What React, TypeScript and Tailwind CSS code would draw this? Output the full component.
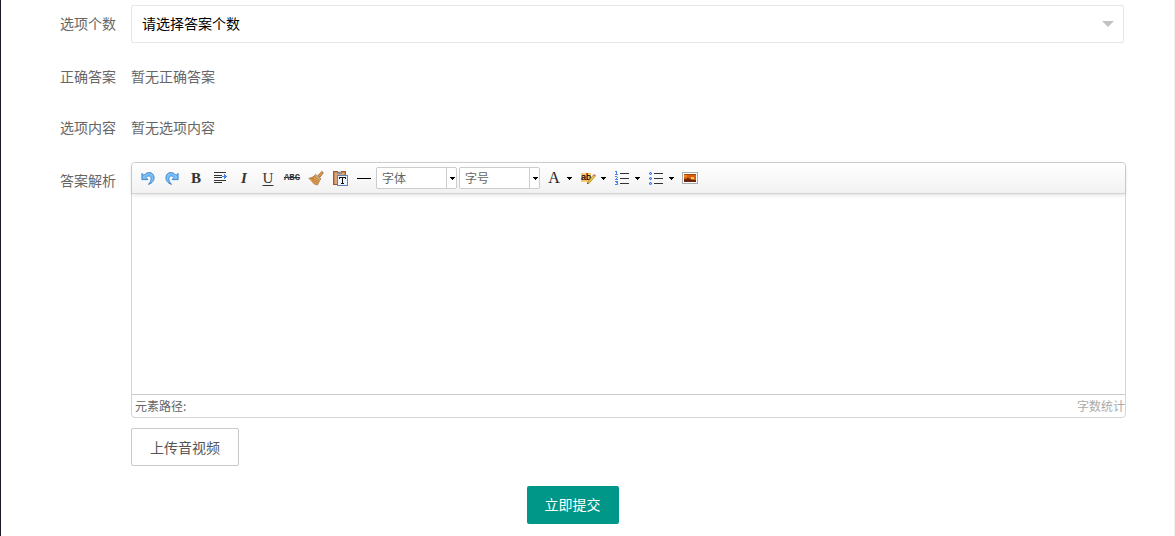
import type { ReactNode } from "react";

function Undo() {
  return (
    <svg className="h-4 w-4" viewBox="0 0 16 16" fill="#7cc0f5" stroke="#2f7fce" strokeWidth="0.9" strokeLinejoin="round">
      <path d="M1.9 3.4V9.6H8L6 7.5C7.3 5.6 10.6 5.3 11.1 8C11.4 10.4 10.2 12.4 8.4 14.4C12.2 13.3 14.4 10.4 14 7C13.3 1.9 7.4 1 4 5.4Z" />
    </svg>
  );
}

function Redo() {
  return (
    <svg className="h-4 w-4" viewBox="0 0 16 16" fill="#7cc0f5" stroke="#2f7fce" strokeWidth="0.9" strokeLinejoin="round">
      <path d="M14.1 3.4V9.6H8L10 7.5C8.7 5.6 5.4 5.3 4.9 8C4.6 10.4 5.8 12.4 7.6 14.4C3.8 13.3 1.6 10.4 2 7C2.7 1.9 8.6 1 12 5.4Z" />
    </svg>
  );
}

function Indent() {
  return (
    <svg className="h-4 w-4" viewBox="0 0 16 16" shapeRendering="crispEdges">
      <path d="M2 2.5H14M2 5.5H10M2 7.5H10M2 10.5H14M2 12.5H10" stroke="#333" strokeWidth="1" />
      <path d="M10 6H12V4H13V5H14V6H15V7H14V8H13V9H12V7H10Z" fill="#4b83f0" />
    </svg>
  );
}

function Broom() {
  return (
    <svg className="h-4 w-4" viewBox="0 0 16 16">
      <path d="M10 5.6L13.8 1.4L15.4 2.8L12 7.2Z" fill="#e39b45" stroke="#87501d" strokeWidth="0.7" />
      <path d="M7.6 4.4L13 9L11.4 10.8L6.2 6Z" fill="#d9b078" stroke="#7b5a34" strokeWidth="0.6" />
      <path d="M6 6.1L11.4 10.9L9.6 15L7 14.4L4.8 12.8L3.4 10.8L0.8 8.2L3.6 7.6Z" fill="#eaa552" stroke="#a3642a" strokeWidth="0.6" />
      <path d="M2.8 8.8L6 8M4.2 10.6L7.4 9.2M5.8 12.4L8.8 10.4M7.8 13.8L10 11.4" stroke="#8d5322" strokeWidth="0.7" />
    </svg>
  );
}

function PasteText() {
  return (
    <svg className="h-4 w-4" viewBox="0 0 16 16" shapeRendering="crispEdges">
      <rect x="1" y="1" width="13" height="14" fill="#9c5a2c" />
      <rect x="2" y="2" width="11" height="12" fill="#c98a58" />
      <rect x="3" y="3" width="9" height="11" fill="#d9a67c" />
      <rect x="5" y="2" width="5" height="2" fill="#8b8b8b" />
      <rect x="6" y="1" width="3" height="1" fill="#d8d8d8" />
      <rect x="5.5" y="5.5" width="10" height="10" fill="#eef3fb" stroke="#5d83b5" />
      <path d="M7 7H14V9H13V8H11V13H12V14H9V13H10V8H8V9H7Z" fill="#111" />
    </svg>
  );
}

function Picture() {
  return (
    <svg className="h-4 w-4" viewBox="0 0 16 16" shapeRendering="crispEdges">
      <rect x="0.5" y="2.5" width="15" height="11" fill="#fff" stroke="#aaa" />
      <rect x="2" y="4" width="12" height="8" fill="#d2600c" />
      <rect x="2" y="4" width="12" height="1" fill="#a8430a" />
      <path d="M2 5H5V7H2Z" fill="#e98a1f" />
      <path d="M2 9H5V8H7V9H9V10H14V12H2Z" fill="#6b250c" />
      <rect x="9" y="7" width="3" height="2" fill="#ffc64a" />
    </svg>
  );
}

function Highlight() {
  return (
    <svg className="h-4 w-4" viewBox="0 0 16 16">
      <rect x="1" y="3" width="10" height="9" fill="#fcc66d" />
      <text x="1" y="10" fontSize="9" fontFamily="Liberation Sans, sans-serif" fill="#000" stroke="#000" strokeWidth="0.2">
        ab
      </text>
      <path d="M7.4 13.6L8.2 11.6L13.4 5L15 6.4L9.6 12.8Z" fill="#f6cf45" stroke="#8b6412" strokeWidth="0.6" />
      <path d="M13.4 5L14.3 4L16 5.4L15 6.4Z" fill="#dc6650" />
      <path d="M7.1 13.9L7.7 12.4L8.8 13.3Z" fill="#222" />
    </svg>
  );
}

function NumberedList() {
  return (
    <svg className="h-4 w-4" viewBox="0 0 16 16" shapeRendering="crispEdges">
      <path d="M6 3.5H15M6 8.5H15M6 13.5H15" stroke="#333" />
      <path d="M2 1H3V4H4V5H1V4H2V2H1V1ZM1 6H3V7H4V8H3V9H4V10H1V9H2V8H3V7H1ZM1 11H4V15H1V14H3V13H2V12H1Z" fill="#4b83f0" />
    </svg>
  );
}

function BulletList() {
  return (
    <svg className="h-4 w-4" viewBox="0 0 16 16" shapeRendering="crispEdges">
      <path d="M6 3.5H15M6 8.5H15M6 13.5H15" stroke="#333" />
      <path
        d="M2 2H3V3H2ZM1 3H2V4H1ZM3 3H4V4H3ZM2 4H3V5H2ZM2 7H3V8H2ZM1 8H2V9H1ZM3 8H4V9H3ZM2 9H3V10H2ZM2 12H3V13H2ZM1 13H2V14H1ZM3 13H4V14H3ZM2 14H3V15H2Z"
        fill="#2f6df0"
      />
      <path d="M1 2H4V5H1ZM1 7H4V10H1ZM1 12H4V15H1Z" fill="#4b83f0" opacity="0.4" />
    </svg>
  );
}

function Caret() {
  return (
    <svg className="h-[3px] w-[7px] shrink-0" viewBox="0 0 7 3" shapeRendering="crispEdges">
      <path d="M1 0H6V1H5V2H4V3H3V2H2V1H1Z" fill="#000" />
    </svg>
  );
}

function ToolButton({ label, children }: { label: string; children: ReactNode }) {
  return (
    <button
      type="button"
      title={label}
      aria-label={label}
      className="flex h-5 w-6 shrink-0 items-center justify-center font-['Liberation_Serif',serif] text-[15px] leading-4 text-[#333]"
    >
      {children}
    </button>
  );
}

function SplitButton({ label, children }: { label: string; children: ReactNode }) {
  return (
    <button
      type="button"
      title={label}
      aria-label={label}
      className="flex h-5 w-[34px] shrink-0 items-center gap-1 pl-1 font-['Liberation_Serif',serif] text-base leading-4 text-[#222]"
    >
      {children}
      <Caret />
    </button>
  );
}

function Combo({ label }: { label: string }) {
  return (
    <div className="relative mr-0.5 h-[22px] w-[81px] shrink-0 rounded-xs border border-[#ccc] bg-white">
      <select aria-label={label} className="block h-full w-full appearance-none bg-transparent pl-[5px] text-xs text-[#666] outline-none">
        <option>{label}</option>
      </select>
      <span className="pointer-events-none absolute inset-y-0 right-0 flex w-[10px] items-center justify-end border-l border-[#ccc]">
        <Caret />
      </span>
    </div>
  );
}

function Label({ htmlFor, children }: { htmlFor?: string; children: ReactNode }) {
  const style = "w-[110px] shrink-0 pt-2 pb-[10px] pr-[15px] text-right leading-5";
  return htmlFor ? (
    <label htmlFor={htmlFor} className={style}>
      {children}
    </label>
  ) : (
    <span className={style}>{children}</span>
  );
}

export default function App() {
  return (
    <div className="min-h-screen border-r border-l border-r-[#eee] border-l-[#1a1a24] bg-white font-['Noto_Sans_CJK_SC',sans-serif] text-sm text-[#666]">
      <form className="pt-[5px] pr-[50px] pb-3 pl-5" onSubmit={(e) => e.preventDefault()}>
        <div className="mb-[15px] flex">
          <Label htmlFor="count">选项个数</Label>
          <div className="relative flex-1">
            <select
              id="count"
              className="block h-[38px] w-full appearance-none rounded-xs border border-[#e6e6e6] bg-white pb-0.5 pl-[10px] text-black outline-none"
            >
              <option>请选择答案个数</option>
            </select>
            <svg className="pointer-events-none absolute top-4 right-[10px] h-[6px] w-3" viewBox="0 0 12 6">
              <path d="M0 0H12L6 6Z" fill="#c2c2c2" />
            </svg>
          </div>
        </div>

        <div className="mb-[13px] flex">
          <Label>正确答案</Label>
          <p className="pt-2 pb-[10px] leading-5">暂无正确答案</p>
        </div>

        <div className="mb-[15px] flex">
          <Label>选项内容</Label>
          <p className="pt-2 pb-[10px] leading-5">暂无选项内容</p>
        </div>

        <div className="mb-5 flex">
          <Label htmlFor="analysis">答案解析</Label>
          <div className="-mr-0.5 min-w-0 flex-1">
            <div className="rounded border border-[#d4d4d4] bg-white">
              <div className="relative flex h-[31px] items-center rounded-t border-b border-[#d4d4d4] bg-linear-to-b from-white to-[#f2f2f2] pl-1 shadow-[0_1px_4px_rgba(0,0,0,0.14)]">
                <ToolButton label="撤销"><Undo /></ToolButton>
                <ToolButton label="重做"><Redo /></ToolButton>
                <ToolButton label="加粗"><b>B</b></ToolButton>
                <ToolButton label="首行缩进"><Indent /></ToolButton>
                <ToolButton label="斜体"><b><i>I</i></b></ToolButton>
                <ToolButton label="下划线"><u className="underline-offset-2">U</u></ToolButton>
                <ToolButton label="删除线"><s className="font-['Liberation_Mono',monospace] text-[9px] font-bold">ABC</s></ToolButton>
                <ToolButton label="清除格式"><Broom /></ToolButton>
                <ToolButton label="纯文本粘贴"><PasteText /></ToolButton>
                <ToolButton label="分隔线"><span className="h-px w-[14px] bg-black" /></ToolButton>
                <Combo label="字体" />
                <Combo label="字号" />
                <SplitButton label="字体颜色"><span className="w-4 text-center">A</span></SplitButton>
                <SplitButton label="背景色"><Highlight /></SplitButton>
                <SplitButton label="有序列表"><NumberedList /></SplitButton>
                <SplitButton label="无序列表"><BulletList /></SplitButton>
                <ToolButton label="图片"><Picture /></ToolButton>
              </div>
              <textarea id="analysis" className="block h-[200px] w-full resize-none p-2 outline-none" />
              <div className="flex h-[23px] items-center justify-between border-t border-[#ccc] pl-[3px] text-xs">
                <span>元素路径:</span>
                <span className="text-[#aaa]">字数统计</span>
              </div>
            </div>
            <button type="button" className="mt-[10px] h-[38px] rounded-xs border border-[#c9c9c9] bg-white px-[18px] text-[#555]">
              上传音视频
            </button>
          </div>
        </div>

        <div className="flex justify-center">
          <button type="submit" className="h-[38px] rounded-xs bg-[#009688] px-[18px] pb-0.5 text-white">
            立即提交
          </button>
        </div>
      </form>
    </div>
  );
}
